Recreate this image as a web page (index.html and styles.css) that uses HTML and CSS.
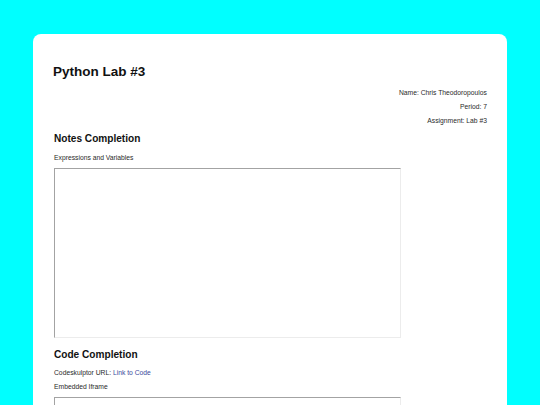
FILE: index.html
```html
<!DOCTYPE html>
<html lang="en">
<head>
<meta charset="utf-8">
<title>Python Lab #3</title>
<link rel="stylesheet" href="styles.css">
</head>
<body>
  <main class="card">
    <h1 class="title">Python Lab #3</h1>
    <div class="info">
      <p class="line">Name: Chris Theodoropoulos</p>
      <p class="line">Period: 7</p>
      <p class="line">Assignment: Lab #3</p>
    </div>
    <section class="section">
      <h2 class="heading heading-first">Notes Completion</h2>
      <p class="line desc">Expressions and Variables</p>
      <div class="frame"></div>
    </section>
    <section class="section">
      <h2 class="heading">Code Completion</h2>
      <p class="line desc-tight">Codeskulptor URL: <a class="link" href="#">Link to Code</a></p>
      <p class="line">Embedded Iframe</p>
      <div class="frame"></div>
    </section>
  </main>
</body>
</html>
```
FILE: styles.css
```css
html, body {
  margin: 0;
  padding: 0;
}
body {
  background: #00ffff;
  font-family: "Liberation Sans", Arial, sans-serif;
  color: #222;
  padding: 34px 33px 0;
}
.card {
  display: block;
  background: #ffffff;
  border-radius: 8px;
  padding: 30px 20px 40px 20px;
}
.title {
  margin: 0;
  font-size: 13.5px;
  line-height: 15px;
  font-weight: bold;
  color: #111;
}
.info {
  margin-top: 7px;
  text-align: right;
}
.line {
  margin: 0;
  font-size: 6.75px;
  line-height: 14px;
  color: #2a2a2a;
}
.heading {
  margin: 11px 0 0 1px;
  font-size: 10.1px;
  line-height: 12px;
  font-weight: bold;
  color: #111;
}
.heading-first {
  margin-top: 5px;
}
.desc {
  margin-top: 6px;
}
.desc-tight {
  margin-top: 5px;
}
.section .line {
  margin-left: 1px;
}
.link {
  color: #3b4a9c;
  text-decoration: none;
}
.frame {
  margin-top: 3px;
  margin-left: 1px;
  width: 345px;
  height: 168px;
  border-style: solid;
  border-width: 1px;
  border-color: #a3a3a3 #ececec #ececec #a3a3a3;
}
```
